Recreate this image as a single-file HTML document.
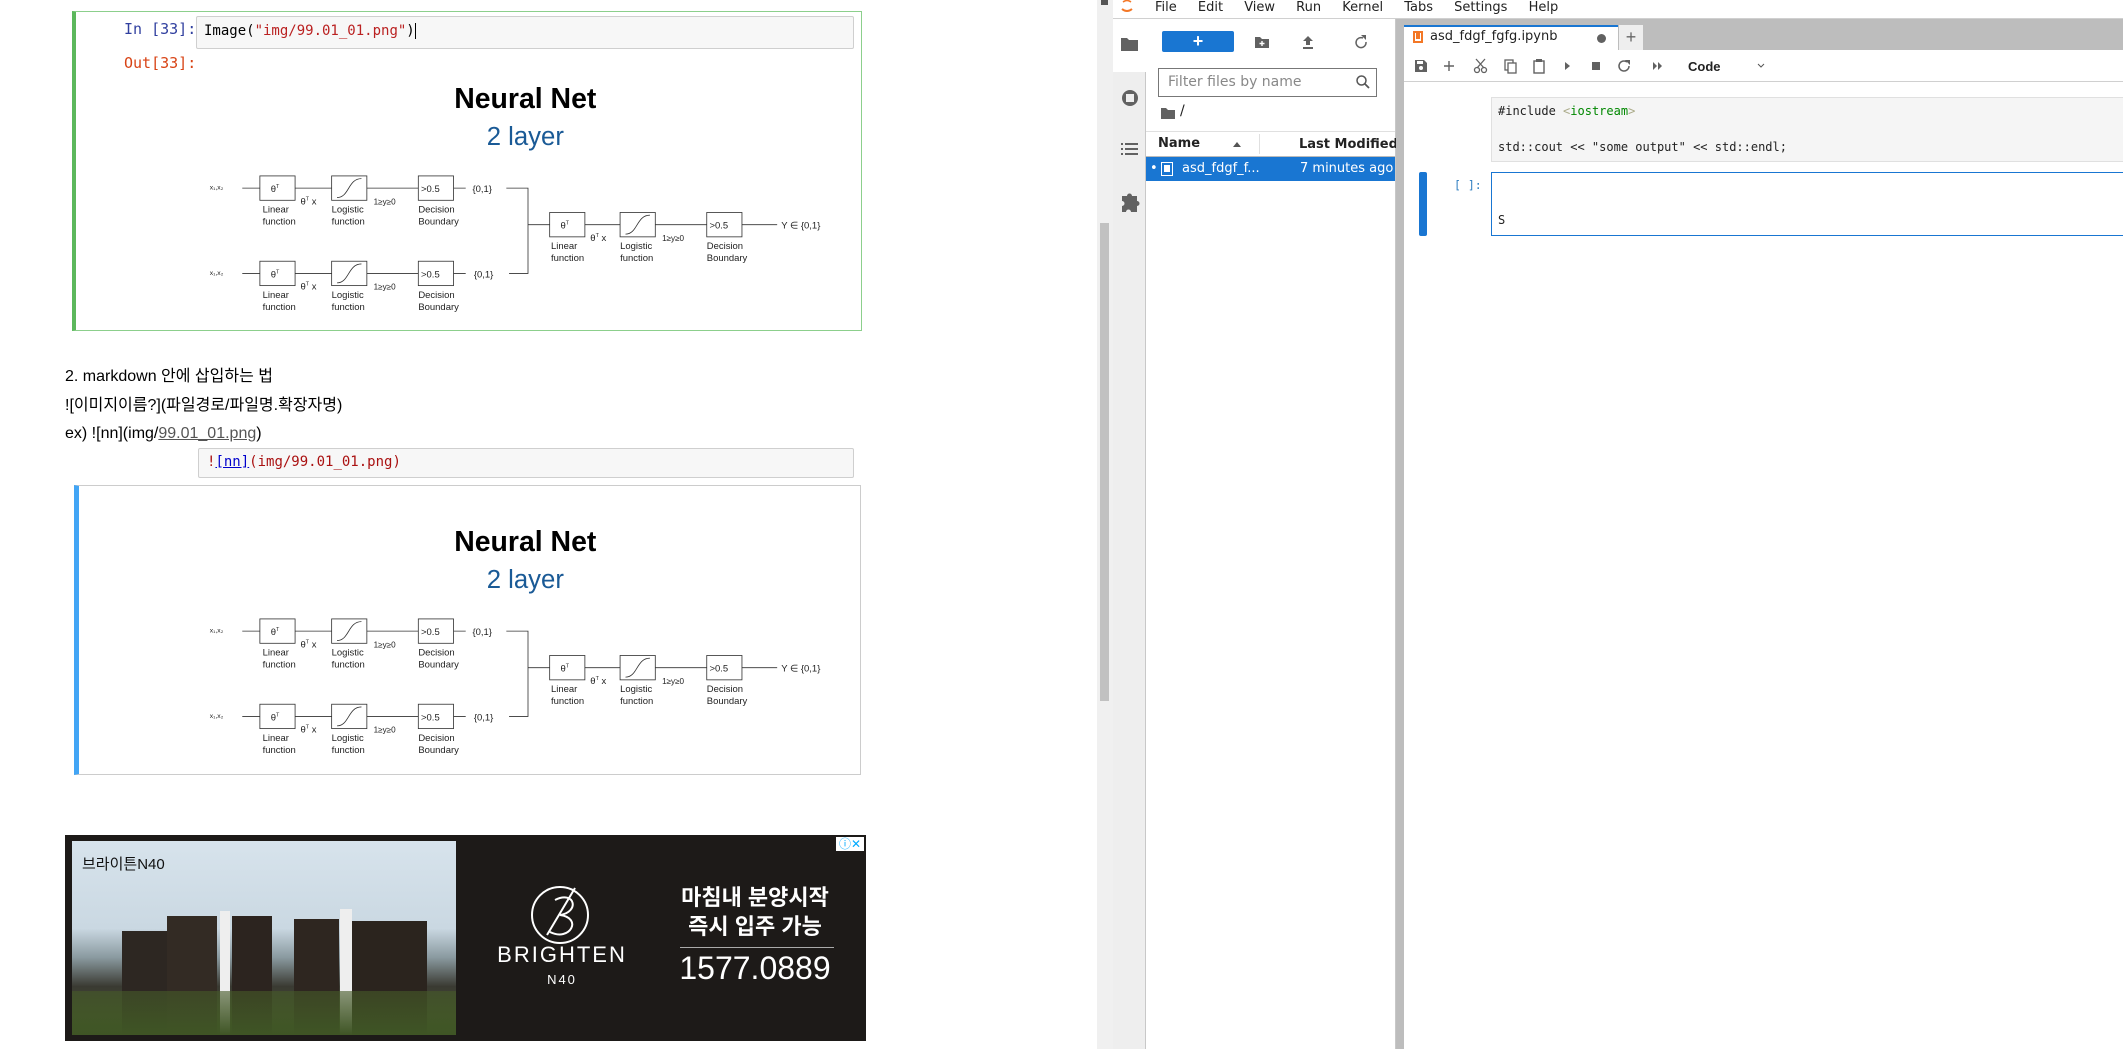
<!DOCTYPE html>
<html><head><meta charset="utf-8">
<style>
*{margin:0;padding:0;box-sizing:border-box}
body{width:2123px;height:1049px;overflow:hidden;background:#fff;position:relative;font-family:"Liberation Sans","Noto Sans CJK KR",sans-serif;color:#000}
.a{position:absolute}
.mono{font-family:"DejaVu Sans Mono","Liberation Mono",monospace}
.nb{font-family:"DejaVu Sans","Liberation Sans",sans-serif}
svg text{font-family:"Liberation Sans",sans-serif}
</style></head><body>

<!-- LEFT NOTEBOOK -->
<div class="a" style="left:72px;top:11px;width:790px;height:320px;border:1px solid #8ccf8c;border-left:4px solid #5cb85c"></div>
<div class="a mono" style="left:124px;top:20px;font-size:15px;color:#303f9f">In [33]:</div>
<div class="a" style="left:196px;top:16px;width:658px;height:33px;background:#f7f7f7;border:1px solid #cfcfcf;border-radius:2px"></div>
<div class="a mono" style="left:204px;top:23px;font-size:14px;color:#000">Image(<span style="color:#ba2121">"img/99.01_01.png"</span>)<span style="border-left:1px solid #000"></span></div>
<div class="a mono" style="left:124px;top:54px;font-size:15px;color:#d84315">Out[33]:</div>

<svg class="a" style="left:203px;top:81px" width="650" height="244" viewBox="150 60 480 180">
<g id="dg">
<text x="388" y="80" font-size="21" font-weight="bold" text-anchor="middle" fill="#000">Neural Net</text>
<text x="388" y="107" font-size="19" text-anchor="middle" fill="#1a5a96">2 layer</text>
<g fill="none" stroke="#333" stroke-width="0.6">
<rect x="192" y="130" width="26" height="18"/><rect x="245" y="130" width="26" height="18"/><rect x="309" y="130" width="26" height="18"/>
<rect x="192" y="193" width="26" height="18"/><rect x="245" y="193" width="26" height="18"/><rect x="309" y="193" width="26" height="18"/>
<rect x="406" y="157" width="26" height="18"/><rect x="458" y="157" width="26" height="18"/><rect x="522" y="157" width="26" height="18"/>
<path d="M179 139H192M218 139H245M271 139H309M335 139H344M374 139H390V202H376M390 166H406M179 202H192M218 202H245M271 202H309M335 202H344M432 166H458M484 166H522M548 166H574"/>
<path d="M249 146C258 146 257 132 267 132M249 209C258 209 257 195 267 195M462 173C471 173 470 159 480 159"/>
</g>
<g font-size="7" fill="#222">
<text x="155" y="140" font-size="5">x₁,x₂</text><text x="155" y="203" font-size="5">x₁,x₂</text>
<text x="200" y="142">θ<tspan font-size="4" dy="-3">T</tspan></text><text x="200" y="205">θ<tspan font-size="4" dy="-3">T</tspan></text><text x="414" y="169">θ<tspan font-size="4" dy="-3">T</tspan></text>
<text x="311" y="142">&gt;0.5</text><text x="311" y="205">&gt;0.5</text><text x="524" y="169">&gt;0.5</text>
<text x="349" y="142">{0,1}</text><text x="350" y="205">{0,1}</text><text x="577" y="169">Y ∈ {0,1}</text>
<text x="222" y="151">θ<tspan font-size="4" dy="-3">T</tspan><tspan dy="3"> x</tspan></text><text x="222" y="214">θ<tspan font-size="4" dy="-3">T</tspan><tspan dy="3"> x</tspan></text><text x="436" y="178">θ<tspan font-size="4" dy="-3">T</tspan><tspan dy="3"> x</tspan></text>
<text x="276" y="151" font-size="6">1≥y≥0</text><text x="276" y="214" font-size="6">1≥y≥0</text><text x="489" y="178" font-size="6">1≥y≥0</text>
<text x="194" y="157">Linear</text><text x="194" y="166">function</text><text x="245" y="157">Logistic</text><text x="245" y="166">function</text><text x="309" y="157">Decision</text><text x="309" y="166">Boundary</text>
<text x="194" y="220">Linear</text><text x="194" y="229">function</text><text x="245" y="220">Logistic</text><text x="245" y="229">function</text><text x="309" y="220">Decision</text><text x="309" y="229">Boundary</text>
<text x="407" y="184">Linear</text><text x="407" y="193">function</text><text x="458" y="184">Logistic</text><text x="458" y="193">function</text><text x="522" y="184">Decision</text><text x="522" y="193">Boundary</text>
</g>
</g>
</svg>

<div class="a" style="left:65px;top:363px;font-size:16px;line-height:28.5px;color:#000">
2. markdown 안에 삽입하는 법<br>![이미지이름?](파일경로/파일명.확장자명)<br>ex) ![nn](img/<span style="text-decoration:underline;color:#555">99.01_01.png</span>)
</div>
<div class="a" style="left:198px;top:448px;width:656px;height:30px;background:#f7f7f7;border:1px solid #cfcfcf;border-radius:2px"></div>
<div class="a mono" style="left:207px;top:454px;font-size:14px;color:#a11">!<span style="color:#00c;text-decoration:underline">[nn]</span>(img/99.01_01.png)</div>

<div class="a" style="left:74px;top:485px;width:787px;height:290px;border:1px solid #ccc;border-left:5px solid #42a5f5"></div>
<svg class="a" style="left:203px;top:524px" width="650" height="244" viewBox="150 387 480 180">
<use href="#dg" transform="translate(0,327)"/>
</svg>

<!-- AD -->
<div class="a" style="left:65px;top:835px;width:801px;height:206px;background:#1d1a18"></div>
<div class="a" style="left:72px;top:841px;width:384px;height:194px;background:linear-gradient(180deg,#d7e3ec 0%,#cad8e2 45%,#8a9aa0 60%,#3a3a32 75%,#4a5a30 100%);overflow:hidden">
 <div class="a" style="left:50px;top:90px;width:90px;height:105px;background:#2d2722"></div>
 <div class="a" style="left:95px;top:75px;width:50px;height:120px;background:#332b24"></div>
 <div class="a" style="left:148px;top:70px;width:10px;height:125px;background:#eee"></div>
 <div class="a" style="left:160px;top:75px;width:40px;height:120px;background:#2c241f"></div>
 <div class="a" style="left:222px;top:78px;width:45px;height:117px;background:#2e2620"></div>
 <div class="a" style="left:268px;top:68px;width:12px;height:127px;background:#eee"></div>
 <div class="a" style="left:280px;top:80px;width:75px;height:115px;background:#2b241e"></div>
 <div class="a" style="left:0;top:150px;width:384px;height:44px;background:linear-gradient(180deg,rgba(70,90,40,.6),#3f5525)"></div>
 <div class="a" style="left:10px;top:12px;font-size:15px;color:#111">브라이튼N40</div>
</div>
<svg class="a" style="left:525px;top:880px" width="70" height="70" viewBox="0 0 70 70"><circle cx="35" cy="35" r="28" fill="none" stroke="#fff" stroke-width="2"/><path d="M22 55L50 8M30 20C50 10 55 32 35 35C58 38 45 62 25 52" fill="none" stroke="#fff" stroke-width="2"/></svg>
<div class="a" style="left:492px;top:942px;width:140px;text-align:center;color:#fff;font-size:22px;letter-spacing:2px">BRIGHTEN</div>
<div class="a" style="left:492px;top:972px;width:140px;text-align:center;color:#fff;font-size:13px;letter-spacing:2px">N40</div>
<div class="a" style="left:675px;top:883px;width:160px;text-align:center;color:#fff;font-size:22px;line-height:29px;font-weight:bold">마침내 분양시작<br>즉시 입주 가능</div>
<div class="a" style="left:680px;top:947px;width:154px;height:1px;background:#aaa"></div>
<div class="a" style="left:675px;top:950px;width:160px;text-align:center;color:#fff;font-size:32px">1577.0889</div>
<div class="a" style="left:836px;top:837px;width:28px;height:14px;background:#fff;font-size:12px;line-height:14px;color:#0af;text-align:center">ⓘ✕</div>

<!-- DIVIDER / SCROLLBAR -->
<div class="a" style="left:1097px;top:0;width:16px;height:1049px;background:#f0f0f0"></div>
<div class="a" style="left:1100px;top:223px;width:9px;height:478px;background:#c1c1c1"></div>
<div class="a" style="left:1101px;top:0;width:7px;height:5px;background:#555"></div>

<!-- JUPYTERLAB -->
<div class="a" style="left:1113px;top:0;width:1010px;height:19px;background:#fff;border-bottom:1px solid #d0d0d0"></div>
<svg class="a" style="left:1120px;top:0" width="14" height="14"><path d="M2 9Q7 13 12 9" stroke="#f37726" stroke-width="2" fill="none"/><path d="M3 2Q7 -1 11 2" stroke="#f37726" stroke-width="1.5" fill="none"/></svg>
<div class="a nb" style="left:1155px;top:0;font-size:13px;color:#222;word-spacing:17px">File Edit View Run Kernel Tabs Settings Help</div>

<div class="a" style="left:1113px;top:19px;width:33px;height:1030px;background:#eee;border-right:1px solid #c8c8c8"></div>
<div class="a" style="left:1113px;top:19px;width:34px;height:53px;background:#fff"></div>
<svg class="a" style="left:1118px;top:30px" width="24" height="200" viewBox="0 0 24 200">
<path d="M3 8h6l2 2h9v11H3z" fill="#616161"/>
<circle cx="12" cy="68" r="8" fill="#616161"/><rect x="8" y="64" width="8" height="8" fill="#eee"/>
<g fill="#616161"><rect x="3" y="113" width="2" height="2"/><rect x="7" y="113" width="13" height="2"/><rect x="3" y="118" width="2" height="2"/><rect x="7" y="118" width="13" height="2"/><rect x="3" y="123" width="2" height="2"/><rect x="7" y="123" width="13" height="2"/></g>
<path d="M4 166h5a2.5 2.5 0 0 1 5 0h5v5a2.5 2.5 0 0 1 0 5v6h-6a2.5 2.5 0 0 0-5 0H4v-6a2.5 2.5 0 0 0 0-5z" fill="#616161"/>
</svg>

<div class="a" style="left:1146px;top:19px;width:250px;height:1030px;background:#fff;border-right:1px solid #c8c8c8"></div>
<div class="a" style="left:1162px;top:31px;width:72px;height:21px;background:#1976d2;border-radius:2px;color:#fff;text-align:center;font-size:18px;line-height:20px;font-weight:bold">+</div>
<svg class="a" style="left:1253px;top:33px" width="120" height="18" viewBox="0 0 120 18">
<path d="M2 4h5l2 2h7v9H2z" fill="#616161"/><path d="M9 8v5M6.5 10.5h5" stroke="#fff" stroke-width="1.4"/>
<path d="M55 3l-5 5h3v4h4V8h3zM50 14h10v2H50z" fill="#616161"/>
<path d="M110 5a5 5 0 1 0 3 4" fill="none" stroke="#616161" stroke-width="1.5"/><path d="M108 2h5v5z" fill="#616161"/>
</svg>
<div class="a" style="left:1158px;top:68px;width:219px;height:29px;border:1px solid #777"></div>
<div class="a nb" style="left:1168px;top:74px;font-size:14px;color:#888">Filter files by name</div>
<svg class="a" style="left:1355px;top:74px" width="16" height="16"><circle cx="6.5" cy="6.5" r="4.5" fill="none" stroke="#555" stroke-width="1.5"/><path d="M10 10l4 4" stroke="#555" stroke-width="1.8"/></svg>
<svg class="a" style="left:1161px;top:107px" width="14" height="12"><path d="M0 1h5l2 2h7v9H0z" fill="#616161"/></svg>
<div class="a nb" style="left:1180px;top:103px;font-size:14px;color:#222">/</div>
<div class="a" style="left:1146px;top:131px;width:249px;height:1px;background:#e0e0e0"></div>
<div class="a" style="left:1259px;top:134px;width:1px;height:20px;background:#e0e0e0"></div>
<div class="a nb" style="left:1158px;top:136px;font-size:13px;font-weight:bold;color:#222">Name</div>
<div class="a" style="left:1233px;top:142px;width:0;height:0;border-left:4px solid transparent;border-right:4px solid transparent;border-bottom:5px solid #555"></div>
<div class="a nb" style="left:1299px;top:137px;font-size:13px;font-weight:bold;color:#222">Last Modified</div>
<div class="a" style="left:1146px;top:156px;width:249px;height:1px;background:#bbb"></div>
<div class="a" style="left:1146px;top:157px;width:249px;height:24px;background:#1976d2"></div>
<div class="a nb" style="left:1150px;top:161px;font-size:13px;color:#fff">•</div>
<div class="a" style="left:1161px;top:162px;width:12px;height:14px;border:1.5px solid #fff"></div>
<div class="a" style="left:1164px;top:165px;width:6px;height:7px;background:#fff"></div>
<div class="a nb" style="left:1182px;top:161px;font-size:13px;color:#fff">asd_fdgf_f...</div>
<div class="a nb" style="left:1300px;top:161px;font-size:13px;color:#fff">7 minutes ago</div>

<!-- main area -->
<div class="a" style="left:1396px;top:19px;width:727px;height:1030px;background:#bdbdbd"></div>
<div class="a" style="left:1404px;top:50px;width:719px;height:999px;background:#fff"></div>
<div class="a" style="left:1404px;top:25px;width:214px;height:26px;background:#fff;border-top:2px solid #1976d2"></div>
<div class="a" style="left:1413px;top:31px;width:10px;height:12px;border:2px solid #f37726;background:#fff"></div>
<div class="a" style="left:1416px;top:33px;width:4px;height:6px;background:#f37726"></div>
<div class="a nb" style="left:1430px;top:29px;font-size:13px;color:#222">asd_fdgf_fgfg.ipynb</div>
<div class="a" style="left:1597px;top:34px;width:9px;height:9px;border-radius:50%;background:#616161"></div>
<div class="a" style="left:1619px;top:25px;width:24px;height:25px;background:#eee;color:#666;text-align:center;font-size:18px;line-height:24px">+</div>
<div class="a" style="left:1404px;top:81px;width:719px;height:1px;background:#d0d0d0"></div>
<svg class="a" style="left:1412px;top:57px" width="360" height="18" viewBox="0 0 360 18">
<g fill="#616161">
<path d="M3 3h9l3 3v9H3z"/><rect x="5" y="4" width="6" height="3" fill="#fff"/><circle cx="9" cy="11" r="2" fill="#fff"/>
<path d="M37 4v10M32 9h10" stroke="#616161" stroke-width="1.4"/>
<circle cx="65" cy="13" r="2.5" fill="none" stroke="#616161" stroke-width="1.3"/><circle cx="72" cy="13" r="2.5" fill="none" stroke="#616161" stroke-width="1.3"/><path d="M65 11L73 2M72 11L64 2" stroke="#616161" stroke-width="1.3"/>
<rect x="93" y="3" width="8" height="10" fill="none" stroke="#616161" stroke-width="1.3"/><rect x="96" y="6" width="8" height="10" fill="#fff" stroke="#616161" stroke-width="1.3"/>
<rect x="122" y="4" width="10" height="12" fill="none" stroke="#616161" stroke-width="1.4"/><rect x="124" y="2" width="6" height="3"/>
<path d="M153 5l5 4-5 4z"/>
<rect x="180" y="5" width="8" height="8"/>
<path d="M215 5a5 5 0 1 0 2 4" fill="none" stroke="#616161" stroke-width="1.5"/><path d="M213 3h5v5z"/>
<path d="M241 5l4 4-4 4zM246 5l4 4-4 4z"/>
</g>
<text x="276" y="14" font-size="13" font-family="DejaVu Sans,sans-serif" font-weight="bold" fill="#222">Code</text>
<path d="M346 7l3 3 3-3" stroke="#555" fill="none"/>
</svg>

<div class="a" style="left:1491px;top:97px;width:640px;height:65px;background:#f5f5f5;border:1px solid #e0e0e0"></div>
<div class="a mono" style="left:1498px;top:93px;font-size:12px;line-height:36px;color:#222;white-space:pre">#include <span style="color:#aa8">&lt;</span><span style="color:#080">iostream</span><span style="color:#aa8">&gt;</span>
std::cout &lt;&lt; "some output" &lt;&lt; std::endl;</div>
<div class="a" style="left:1419px;top:172px;width:8px;height:64px;background:#1976d2;border-radius:2px"></div>
<div class="a mono" style="left:1454px;top:178px;font-size:11.5px;color:#307fc1">[ ]:</div>
<div class="a" style="left:1491px;top:172px;width:640px;height:64px;border:1px solid #1976d2;background:#fff"></div>
<div class="a mono" style="left:1498px;top:213px;font-size:12px;color:#222">S</div>
</body></html>
